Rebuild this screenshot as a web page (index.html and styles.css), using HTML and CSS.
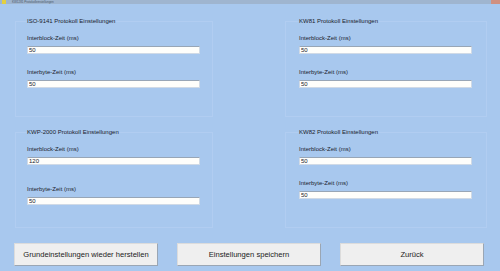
FILE: index.html
```html
<!DOCTYPE html>
<html lang="de">
<head>
  <meta charset="UTF-8">
  <title>Protokolleinstellungen</title>
  <link rel="stylesheet" href="styles.css">
</head>
<body>
  <div class="titlebar">
    <span class="app-icon"></span>
    <span class="title-text">KW1281 Protokolleinstellungen</span>
    <span class="close-btn"></span>
  </div>

  <div class="settings">
    <fieldset class="group">
      <legend>ISO-9141 Protokoll Einstellungen</legend>
      <label>Interblock-Zeit (ms)</label>
      <input type="text" value="50">
      <label class="second">Interbyte-Zeit (ms)</label>
      <input type="text" value="50">
    </fieldset>

    <fieldset class="group right">
      <legend>KW81 Protokoll Einstellungen</legend>
      <label>Interblock-Zeit (ms)</label>
      <input type="text" value="50">
      <label class="second">Interbyte-Zeit (ms)</label>
      <input type="text" value="50">
    </fieldset>

    <fieldset class="group wide">
      <legend>KWP-2000 Protokoll Einstellungen</legend>
      <label>Interblock-Zeit (ms)</label>
      <input type="text" value="120">
      <label class="second">Interbyte-Zeit (ms)</label>
      <input type="text" value="50">
    </fieldset>

    <fieldset class="group right">
      <legend>KW82 Protokoll Einstellungen</legend>
      <label>Interblock-Zeit (ms)</label>
      <input type="text" value="50">
      <label class="second">Interbyte-Zeit (ms)</label>
      <input type="text" value="50">
    </fieldset>
  </div>

  <div class="buttons">
    <button class="action">Grundeinstellungen wieder herstellen</button>
    <button class="action">Einstellungen speichern</button>
    <button class="action">Zurück</button>
  </div>
</body>
</html>
```

FILE: styles.css
```css
body {
  margin: 0;
  width: 500px;
  height: 271px;
  overflow: hidden;
  background-color: #a8c8ee;
  font-family: 'Liberation Sans', Arial, sans-serif;
  color: #1a222c;
}
.titlebar {
  height: 4px;
  background: #9fb5cf;
  display: flex;
  align-items: center;
  overflow: hidden;
}
.app-icon {
  width: 4px;
  height: 4px;
  margin-left: 2px;
  background: #e3d040;
}
.title-text {
  margin-left: 6px;
  font-size: 3px;
  line-height: 4px;
  color: #4a5868;
  flex: 1;
}
.close-btn {
  width: 9px;
  height: 4px;
  background: #d09080;
}
.settings {
  display: grid;
  grid-template-columns: 197px 202px;
  column-gap: 73px;
  row-gap: 12px;
  padding: 14px 0 0 15px;
}
.group {
  margin: 0;
  border: 1px solid #b1cdf1;
  padding: 11px 12px 27px 11px;
  display: flex;
  flex-direction: column;
  height: 99px;
  box-sizing: border-box;
}
.group.right {
  padding-left: 13px;
  padding-right: 14px;
}
.group legend {
  padding: 0;
  margin-left: 0;
  font-size: 6px;
  line-height: 6px;
}
.group label {
  font-size: 6px;
  line-height: 7px;
  margin-bottom: 4px;
}
.group label.second {
  margin-top: 15px;
}
.group.wide label.second {
  margin-top: 21px;
}
.group input {
  height: 8px;
  width: 173px;
  box-sizing: border-box;
  border: 1px solid #d0dae6;
  border-top-color: #98a6b6;
  background: #fefefb;
  padding: 0 1px;
  font-family: 'Liberation Sans', Arial, sans-serif;
  font-size: 6px;
  color: #1a222c;
}
.buttons {
  display: flex;
  gap: 19px;
  padding: 15px 0 0 14px;
}
.action {
  width: 144px;
  height: 23px;
  background: #efefef;
  border: 1px solid #dcdcdc;
  border-right-color: #9aa6b4;
  border-bottom-color: #9aa6b4;
  font-family: 'Liberation Sans', Arial, sans-serif;
  font-size: 7.6px;
  color: #222;
  padding: 0;
}
```
